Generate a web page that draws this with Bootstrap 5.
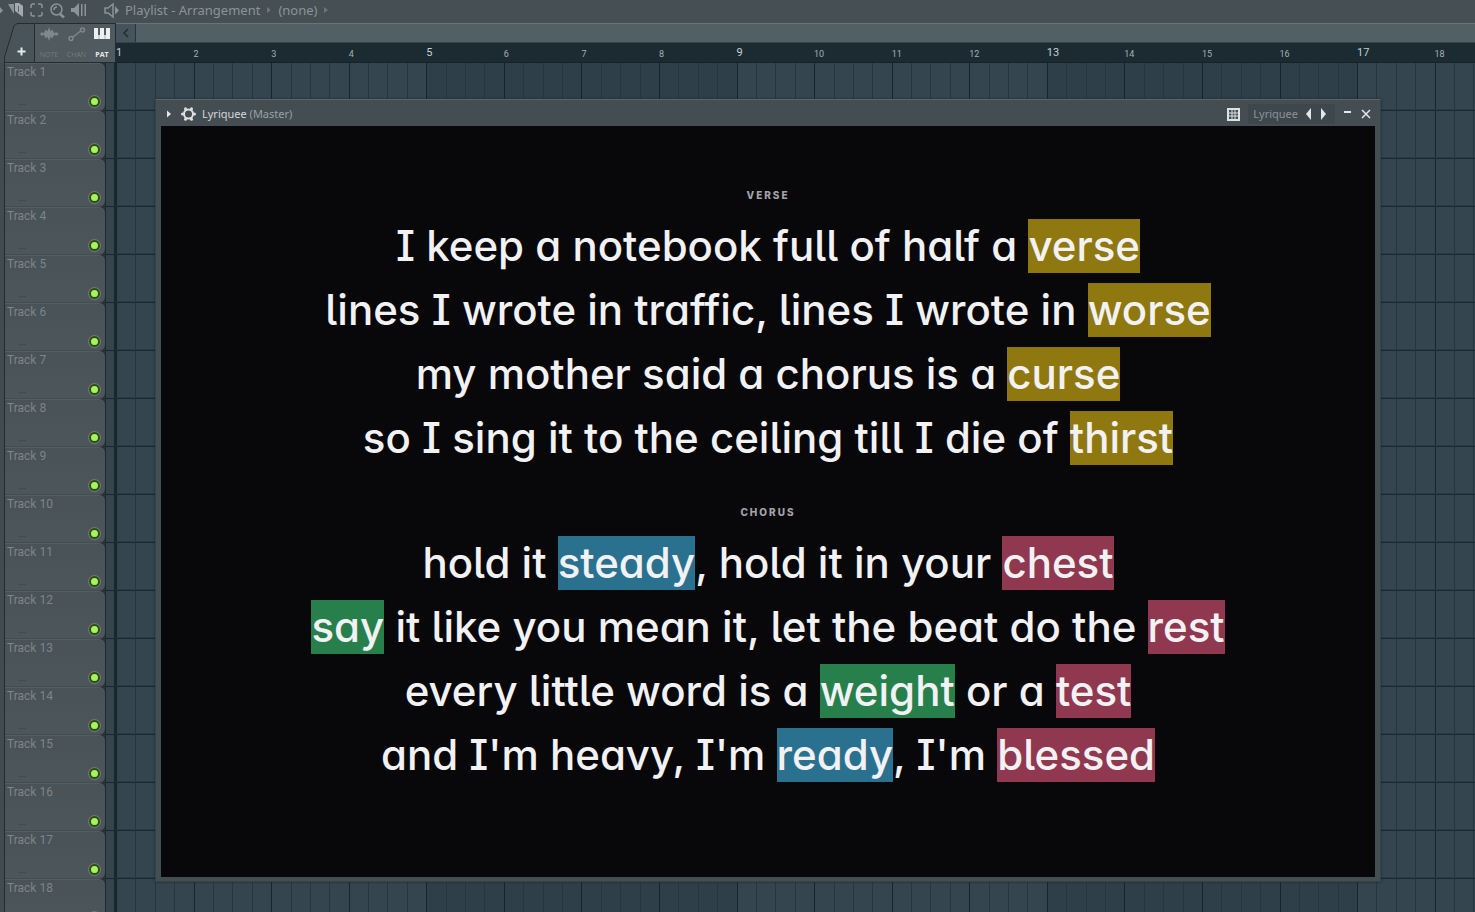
<!DOCTYPE html>
<html lang="en" data-bs-theme="dark">
<head>
<meta charset="utf-8">
<meta name="viewport" content="width=device-width, initial-scale=1">
<title>Playlist - Arrangement</title>
<link href="https://cdn.jsdelivr.net/npm/bootstrap@5.3.0/dist/css/bootstrap.min.css" rel="stylesheet">
<style>
:root { --bar: calc(100% / 17.52); }
body { background: #464f54; color: #8b9497; font-family: "Noto Sans", sans-serif; font-size: 13px; line-height: 20px; }
button { background: none; border: 0; padding: 0; color: inherit; font: inherit; }
svg { display: block; flex: none; }
.toolbar-top { height: 23px; padding-bottom: 4px; background: #464f54; }
.crumbs { gap: 7px; }
.side-w { width: 116px; flex: none; }
.gutter { width: 5px; flex: none; background: #414b50; border-right: 1px solid #222d33; }

/* picker head above the track list */
.picker { height: 40px; }
.picker-modes { flex: 1; background: #505a5f; border: 1px solid #222d33; border-width: 1px 1px 1px 0; padding: 0 5px 0 4px; font-family: "Open Sans", sans-serif; font-size: 7px; line-height: 8px; color: #737d81; }
.picker-modes button { display: flex; flex-direction: column; align-items: center; justify-content: space-between; height: 36px; padding-bottom: 2px; }
.picker-modes button.active { color: #e6eaeb; font-weight: 700; }

/* scroll bar and ruler */
.scrollbar-row { height: 20px; background: #525f65; border-top: 1px solid #65737a; border-bottom: 1px solid #35434a; }
.scroll-left { width: 20px; background: #46535a; border-right: 1px solid #27343b; }
.ruler { height: 20px; background: #1c2b32; border-bottom: 1px solid #15222a; font-family: "Roboto", sans-serif; font-size: 9px; line-height: 22px; color: #a2b0b4; overflow: hidden; }
.ruler span { flex: 0 0 var(--bar); }
.ruler .group { font-size: 11px; line-height: 20px; color: #c4d0d3; }

/* tracks */
.track-list { width: 100px; flex: none; background: #28343a; }
.track { height: 48px; padding: 0 5px 0 2px; background: linear-gradient(#495257, #4d565a); border-top: 1px solid #545d62; border-bottom: 1px solid #434c50; border-radius: 0 6px 6px 0; font-family: "Roboto", sans-serif; font-size: 12px; color: #7c8589; line-height: 16px; }
.track .dots { font-size: 11px; line-height: 10px; color: #343d42; padding-left: 11px; margin-top: 17px; }
.led { width: 11px; height: 11px; margin-bottom: 3px; border-radius: 50%; background: #a6f45c; border: 2px solid #2d491d; outline: 1px solid #70835f; }
.track-gap { width: 11px; flex: none; background: repeating-linear-gradient(#36444b 0 47px, #17262e 47px 48px); border-left: 1px solid #1c2a31; border-right: 2px solid #182830; }
.lanes {
  background:
    repeating-linear-gradient(transparent 0 46px, #2a3b45 46px 47px, #182932 47px 48px),
    repeating-linear-gradient(90deg, #14252e 0 1px, transparent 1px var(--bar)),
    repeating-linear-gradient(90deg, #263640 0 1px, transparent 1px calc(var(--bar) / 4)),
    repeating-linear-gradient(90deg, #34454f 0 calc(var(--bar) * 4), #2e3f49 0 calc(var(--bar) * 8));
}

/* plugin window floating over the playlist */
.plugin { position: absolute; left: 155px; right: 94px; top: 99px; bottom: 30px; padding: 0 5px; background: #444d51; border: 1px solid #37434a; border-top-color: #59656a; box-shadow: 0 0 2px #1b262c; }
.plugin-head { height: 26px; padding-top: 2px; font-size: 11px; color: #99a1a4; }
.plugin-head .name { color: #d3d8da; }
.preset { background: #3e474b; padding: 0 5px; color: #8b9396; height: 20px; }
.stage { background: #08080a; margin-bottom: 4px; padding-top: 61px; color: #f2f2f4; font-family: "Inter", sans-serif; font-feature-settings: "cv05", "cv08", "cv11"; font-size: 42px; font-weight: 500; text-align: center; }
.verse-label { font-family: "Inter", sans-serif; font-feature-settings: normal; font-size: 10px; line-height: 16px; font-weight: 800; letter-spacing: 2px; color: #a3a3a8; margin: 0 0 11px; }
.lyric { line-height: 64px; height: 64px; margin: 0; white-space: nowrap; }
.stanza { margin-bottom: 34px; }
.hit { display: inline-block; height: 54px; line-height: 54px; }
.gold { background: #8f780f; } .blue { background: #2a7190; } .rose { background: #903850; } .leaf { background: #27804c; }
</style>
</head>
<body class="vh-100 overflow-hidden d-flex flex-column position-relative">
<header class="toolbar-top d-flex align-items-center">
  <svg width="104" height="20" viewBox="0 0 104 20" fill="#8b9497" aria-hidden="true">
    <path d="M0 7l3 3.500-3 3z"/><path d="M8 4h6v10z"/><path d="M15 3h4l4 3v11l-8-6z" fill="#a3abae"/><path d="M18.500 6v6" stroke="#5b656a"/>
    <g fill="none" stroke="#8b9497" stroke-width="1.500"><path d="M31 8V6q0-2 2-2h2M38 4h2q2 0 2 2v2M42 12v2q0 2-2 2h-2M35 16h-2q-2 0-2-2v-2"/><circle cx="56.500" cy="9.500" r="5.500"/><path d="M60 14l4 3.500" stroke-width="2.500"/><path d="M54 10a3 3 0 0 1 3-3"/></g>
    <path d="M71 8h3l5-5v14l-5-5h-3zM81 4h1.500v12H81zM84.500 4H86v12h-1.500z"/>
  </svg>
  <svg width="17" height="20" viewBox="0 0 17 20" aria-hidden="true"><path d="M1 8h3l5-4v13l-5-4H1z" fill="none" stroke="#8b9497" stroke-width="1.500"/><path d="M11 6l4 4.500-4 4z" fill="#8b9497"/></svg>
  <nav class="crumbs d-flex align-items-center ms-1">
    <button type="button">Playlist - Arrangement</button>
    <svg width="4" height="8" viewBox="0 0 4 8"><path d="M0 1l4 3-4 3z" fill="#6c767a"/></svg>
    <button type="button">(none)</button>
    <svg width="4" height="8" viewBox="0 0 4 8"><path d="M0 1l4 3-4 3z" fill="#6c767a"/></svg>
  </nav>
</header>

<div class="d-flex">
  <div class="side-w picker d-flex">
    <button type="button" aria-label="Add track"><svg width="35" height="40" viewBox="0 0 35 40"><path d="M4.500 40V34L14 3q1-2.500 4-2.500h16.500v39H4.500" fill="#49535a" stroke="#222d33"/><path d="M17.500 28.500h8M21.500 24.500v8" stroke="#e6eaeb" stroke-width="2"/></svg></button>
    <div class="picker-modes d-flex justify-content-between align-items-center">
      <button type="button"><svg width="20" height="18" viewBox="0 0 20 18"><path d="M1 9l2-2 1.500 1.500L7 4.500l1.500 2L10 2l1.500 4.500 1.500-2 2.500 4L17 7l3 2-3 2-1.500-1.500-2.500 4-1.500-2L10 16l-1.500-4.500-1.500 2-2.500-4L3 11z" fill="#7f888b"/></svg>NOTE</button>
      <button type="button"><svg width="18" height="18" viewBox="0 0 18 18"><path d="M4.500 12.500l8-6.500" stroke="#7f888b" stroke-width="1.500"/><g fill="none" stroke="#7f888b" stroke-width="1.500"><circle cx="3" cy="13.500" r="2"/><circle cx="14.500" cy="5" r="2"/></g></svg>CHAN</button>
      <button type="button" class="active"><svg width="16" height="18" viewBox="0 0 16 18"><path d="M0 3h4v7h2V3h4v7h2V3h4v11H0z" fill="#eceff0"/><path d="M5 10v4M11 10v4" stroke="#a9b0b3"/></svg>PAT</button>
    </div>
  </div>
  <div class="flex-grow-1 overflow-hidden">
    <div class="scrollbar-row d-flex"><button type="button" class="scroll-left d-flex align-items-center justify-content-center" aria-label="Scroll left"><svg width="6" height="10" viewBox="0 0 6 10"><path d="M5 1L1 5l4 4" fill="none" stroke="#1f2b31" stroke-width="1.500"/></svg></button></div>
    <div class="ruler d-flex" id="ruler"></div>
  </div>
</div>

<main class="d-flex flex-grow-1 overflow-hidden">
  <div class="gutter"></div>
  <div class="track-list" id="tracks"></div>
  <div class="track-gap"></div>
  <div class="lanes flex-grow-1"></div>
</main>

<section class="plugin d-flex flex-column" aria-label="Lyriquee">
  <div class="plugin-head d-flex align-items-center">
    <svg width="14" height="14" viewBox="0 0 14 14"><path d="M6 3.500l4 3.500-4 3.500z" fill="#e3e7e8"/></svg>
    <svg class="ms-1 me-1" width="19" height="16" viewBox="0 0 19 16"><circle cx="9.500" cy="8" r="4.500" fill="none" stroke="#dde1e2" stroke-width="2"/><g fill="#dde1e2"><circle cx="3.500" cy="8" r="1.500"/><circle cx="15.500" cy="8" r="1.500"/><circle cx="6.500" cy="2.800" r="1.500"/><circle cx="12.500" cy="2.800" r="1.500"/><circle cx="6.500" cy="13.200" r="1.500"/><circle cx="12.500" cy="13.200" r="1.500"/></g></svg>
    <span class="flex-grow-1"><span class="name">Lyriquee</span> (Master)</span>
    <button type="button" aria-label="Detailed view"><svg width="13" height="13" viewBox="0 0 13 13"><path d="M0 0h13v13H0z" fill="#dde1e2"/><path d="M2 2h9v9H2z" fill="#444d51"/><path d="M2 5h9M2 8h9M5 2v9M8 2v9" stroke="#dde1e2"/></svg></button>
    <div class="preset d-flex align-items-center ms-2 me-2">Lyriquee
      <button type="button" class="ms-2" aria-label="Previous preset"><svg width="6" height="12" viewBox="0 0 6 12"><path d="M5 0v12L0 6z" fill="#e3e7e8"/></svg></button>
      <button type="button" class="ms-2 me-1" aria-label="Next preset"><svg width="6" height="12" viewBox="0 0 6 12"><path d="M1 0l5 6-5 6z" fill="#e3e7e8"/></svg></button>
    </div>
    <button type="button" class="me-2" aria-label="Minimize"><svg width="9" height="10" viewBox="0 0 9 10"><path d="M1 3h7" stroke="#e3e7e8" stroke-width="2"/></svg></button>
    <button type="button" aria-label="Close"><svg width="15" height="10" viewBox="0 0 15 10"><path d="M2 1l8 8M10 1L2 9" stroke="#e3e7e8" stroke-width="1.500"/></svg></button>
  </div>
  <div class="stage flex-grow-1 overflow-hidden">
    <div class="stanza">
      <h2 class="verse-label">VERSE</h2>
      <p class="lyric">I keep a notebook full of half a <span class="hit gold">verse</span></p>
      <p class="lyric">lines I wrote in traffic, lines I wrote in <span class="hit gold">worse</span></p>
      <p class="lyric">my mother said a chorus is a <span class="hit gold">curse</span></p>
      <p class="lyric">so I sing it to the ceiling till I die of <span class="hit gold">thirst</span></p>
    </div>
    <div>
      <h2 class="verse-label">CHORUS</h2>
      <p class="lyric">hold it <span class="hit blue">steady</span>, hold it in your <span class="hit rose">chest</span></p>
      <p class="lyric"><span class="hit leaf">say</span> it like you mean it, let the beat do the <span class="hit rose">rest</span></p>
      <p class="lyric">every little word is a <span class="hit leaf">weight</span> or a <span class="hit rose">test</span></p>
      <p class="lyric">and I'm heavy, I'm <span class="hit blue">ready</span>, I'm <span class="hit rose">blessed</span></p>
    </div>
  </div>
</section>

<script>
document.getElementById('ruler').innerHTML = Array.from({ length: 18 }, (_, i) =>
  `<span class="${i % 4 ? '' : 'group'}">${i + 1}</span>`).join('');
const TRACKS = 18;
document.getElementById('tracks').innerHTML = Array.from({ length: TRACKS }, (_, i) => {
  const more = i < TRACKS - 1 ? '<div class="dots">...</div>' : '';
  return `<div class="track d-flex justify-content-between"><div><div>Track ${i + 1}</div>${more}</div><button type="button" class="led align-self-end" aria-label="Mute track ${i + 1}"></button></div>`;
}).join('');
</script>
<script src="https://cdn.jsdelivr.net/npm/bootstrap@5.3.0/dist/js/bootstrap.bundle.min.js"></script>
</body>
</html>
